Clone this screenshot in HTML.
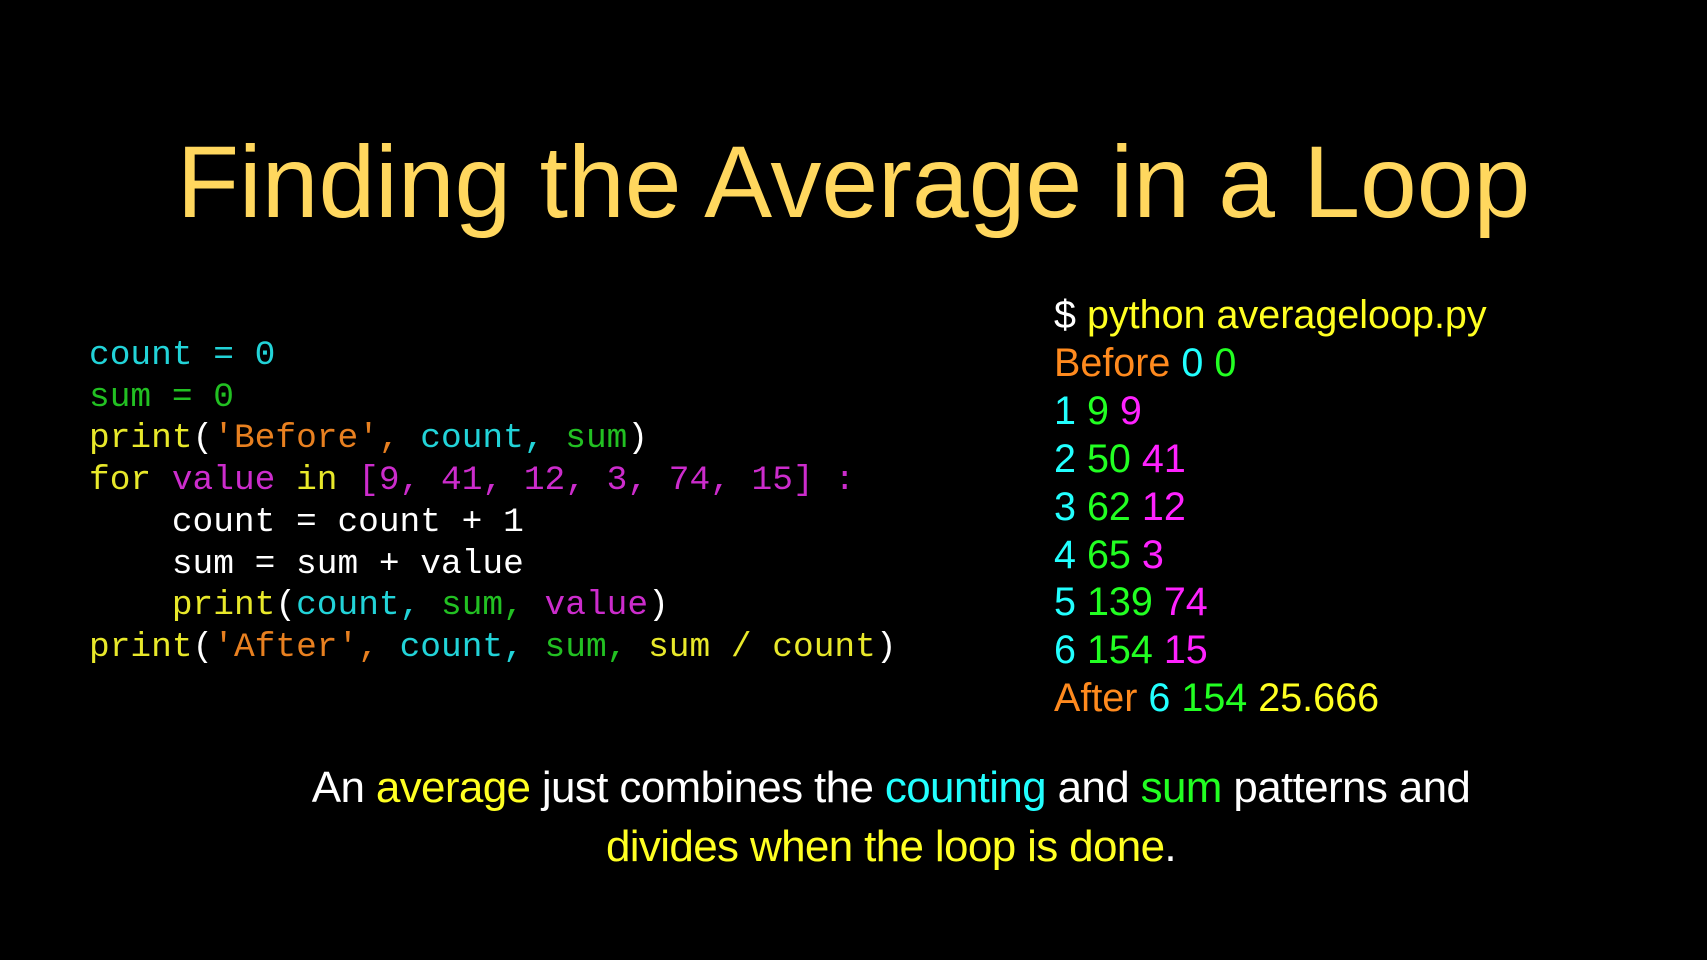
<!DOCTYPE html>
<html><head><meta charset="utf-8"><style>
html,body{margin:0;padding:0;background:#000;}
body{width:1707px;height:960px;position:relative;overflow:hidden;}
.t{position:absolute;left:0;width:1707px;text-align:center;top:131px;font:102px/1 "Liberation Sans",sans-serif;color:#ffd75e;white-space:nowrap;}
.code{position:absolute;left:89px;top:335px;font:34.5px/41.7px "Liberation Mono",monospace;color:#fff;white-space:pre;}
.term{position:absolute;left:1054px;top:292px;font:39.5px/47.9px "Liberation Sans",sans-serif;color:#fff;white-space:pre;}
.bot{position:absolute;left:291px;width:1200px;top:758px;text-align:center;font:44px/59px "Liberation Sans",sans-serif;color:#fff;white-space:nowrap;letter-spacing:-0.65px;}
.c{color:#22d3d8}.g{color:#22c022}.y{color:#e8e82a}.o{color:#e88020}.m{color:#cc2ccc}
.C{color:#22ffff}.G{color:#22ff22}.Y{color:#ffff22}.O{color:#ff8a1e}.M{color:#ff22ff}
</style></head><body>
<div class="t">Finding the Average in a Loop</div>
<div class="code"><span class="c">count = 0</span>
<span class="g">sum = 0</span>
<span class="y">print</span>(<span class="o">'Before', </span><span class="c">count, </span><span class="g">sum</span>)
<span class="y">for </span><span class="m">value </span><span class="y">in </span><span class="m">[9, 41, 12, 3, 74, 15] :</span>
    count = count + 1
    sum = sum + value
    <span class="y">print</span>(<span class="c">count, </span><span class="g">sum, </span><span class="m">value</span>)
<span class="y">print</span>(<span class="o">'After', </span><span class="c">count, </span><span class="g">sum, </span><span class="y">sum / count</span>)</div>
<div class="term">$ <span class="Y">python averageloop.py</span>
<span class="O">Before</span> <span class="C">0</span> <span class="G">0</span>
<span class="C">1</span> <span class="G">9</span> <span class="M">9</span>
<span class="C">2</span> <span class="G">50</span> <span class="M">41</span>
<span class="C">3</span> <span class="G">62</span> <span class="M">12</span>
<span class="C">4</span> <span class="G">65</span> <span class="M">3</span>
<span class="C">5</span> <span class="G">139</span> <span class="M">74</span>
<span class="C">6</span> <span class="G">154</span> <span class="M">15</span>
<span class="O">After</span> <span class="C">6</span> <span class="G">154</span> <span class="Y">25.666</span></div>
<div class="bot">An <span class="Y">average</span> just combines the <span class="C">counting</span> and <span class="G">sum</span> patterns and<br><span class="Y">divides when the loop is done</span>.</div>
</body></html>
